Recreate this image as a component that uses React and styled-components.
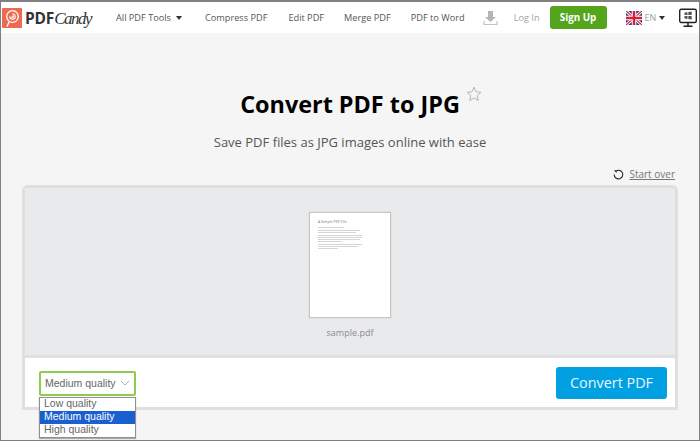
import React from 'react'
import styled, { createGlobalStyle } from 'styled-components'

const Global = createGlobalStyle`
  html, body { margin: 0; padding: 0; }
  body { font-family: "Open Sans", "Liberation Sans", sans-serif; background: #f5f5f5; }
`

const Frame = styled.div`
  width: 700px;
  height: 441px;
  box-sizing: border-box;
  border: 1px solid #808080;
  border-top-width: 2px;
  background: #f5f5f5;
  overflow: hidden;
  position: relative;
`

const Header = styled.header`
  height: 31px;
  background: #fff;
  display: flex;
  align-items: center;
  padding-left: 1px;
`

const Logo = styled.div`
  display: flex;
  align-items: center;
  width: 114px;
  flex: none;
`

const LogoText = styled.span`
  margin-left: 3px;
  font-size: 15.5px;
  font-weight: 700;
  color: #333;
  letter-spacing: -0.2px;
`

const LogoScript = styled.span`
  font-family: "Liberation Serif", serif;
  font-style: italic;
  font-weight: 400;
  font-size: 17px;
  letter-spacing: -1.5px;
`

const Nav = styled.nav`
  display: flex;
  align-items: center;
  gap: 20px;
  flex: none;
`

const NavLink = styled.a`
  font-size: 9.2px;
  color: ${p => (p.$muted ? '#a6a6a6' : '#555')};
  white-space: nowrap;
  display: flex;
  align-items: center;
  margin-right: ${p => p.$after || 0}px;
`

const Caret = styled.span`
  display: inline-block;
  width: 0;
  height: 0;
  margin-left: ${p => (p.$tight ? 0 : 5)}px;
  border-left: 3.5px solid transparent;
  border-right: 3.5px solid transparent;
  border-top: 4px solid #333;
`

const DownloadSlot = styled.div`
  display: flex;
  margin: 0 -4px 0 -2px;
`

const SignUp = styled.button`
  width: 57px;
  height: 23px;
  margin-left: -10px;
  border: none;
  border-radius: 3px;
  background: #55a51c;
  color: #fff;
  font: 700 9.8px "Open Sans", sans-serif;
  padding: 0;
`

const Lang = styled.div`
  display: flex;
  align-items: center;
  margin-left: -1px;
  font-size: 9px;
  color: #a0a0a0;
  gap: 3px;
`

const MonitorSlot = styled.div`
  margin-left: -6px;
  display: flex;
`

const Main = styled.main`
  display: flex;
  flex-direction: column;
  align-items: center;
`

const TitleRow = styled.div`
  margin-top: 55px;
  position: relative;
`

const Title = styled.h1`
  margin: 0;
  font-size: 23.4px;
  line-height: 33px;
  font-weight: 700;
  color: #000;
`

const Star = styled.svg`
  position: absolute;
  right: -22px;
  top: -2px;
`

const Subtitle = styled.p`
  margin: 12px 0 0;
  font-size: 13px;
  line-height: 18px;
  color: #555;
`

const StartRow = styled.div`
  align-self: flex-end;
  margin: 16px 24px 0 0;
  display: flex;
  align-items: center;
  gap: 5px;
  font-size: 10px;
  line-height: 14px;
  color: #777;
  text-decoration: underline;
`

const Panel = styled.section`
  width: 656px;
  box-sizing: border-box;
  margin-top: 4px;
  border: 3px solid #dfdfdf;
  border-radius: 6px 6px 0 0;
  background: #fff;
`

const Preview = styled.div`
  height: 143px;
  background: #e9eaec;
  border-bottom: 3px solid #dfdfdf;
  display: flex;
  flex-direction: column;
  align-items: center;
  padding-top: 24px;
`

const Page = styled.div`
  width: 82px;
  height: 106px;
  box-sizing: border-box;
  background: #fff;
  border: 1px solid #c6c6c6;
  box-shadow: 0 0 1px #bbb;
  padding: 6px 8px;
`

const PageHeading = styled.div`
  font-size: 3.6px;
  line-height: 5px;
  color: #777;
  margin-bottom: 1px;
`

const PageLine = styled.div`
  height: 1px;
  width: ${p => p.$w}px;
  background: #d4d4d4;
  margin-top: ${p => p.$gap || 1}px;
`

const FileName = styled.div`
  margin-top: 8px;
  font-size: 9px;
  line-height: 14px;
  color: #8c8c8c;
`

const Footer = styled.div`
  height: 49px;
  display: flex;
  align-items: center;
  justify-content: space-between;
  padding: 0 8px 0 14px;
`

const SelectWrap = styled.div`
  position: relative;
  margin-top: 1px;
`

const SelectBox = styled.div`
  width: 97px;
  height: 25px;
  box-sizing: border-box;
  border: 2px solid #8fcb4e;
  border-radius: 2px;
  background: #fff;
  display: flex;
  align-items: center;
  justify-content: space-between;
  padding: 0 4px;
  font: 10.5px "Liberation Sans", sans-serif;
  color: #666;
`

const Options = styled.ul`
  position: absolute;
  left: 0;
  top: 26px;
  width: 97px;
  box-sizing: border-box;
  margin: 0;
  padding: 0;
  list-style: none;
  background: #fff;
  border: 1px solid #8f8f8f;
  box-shadow: 0 1px 1px #aaa;
  font: 10.5px "Liberation Sans", sans-serif;
`

const Option = styled.li`
  height: 13px;
  line-height: 11px;
  padding-left: 4px;
  color: ${p => (p.$active ? '#fff' : '#666')};
  background: ${p => (p.$active ? '#1a5fd0' : 'transparent')};
`

const Convert = styled.button`
  width: 111px;
  height: 32px;
  border: none;
  border-radius: 3px;
  background: #00a0e3;
  color: #e6f6fd;
  font: 400 14.4px "Open Sans", sans-serif;
  padding: 0;
`

const LogoIcon = () => (
  <svg width="20" height="20" viewBox="0 0 20 20">
    <rect width="20" height="20" rx="1" fill="#ec6a50" />
    <circle cx="10.5" cy="8.5" r="5.8" fill="none" stroke="#fff" strokeWidth="1.3" />
    <path d="M10.5 5.8a2.7 2.7 0 1 1-2.7 2.7M10.5 7.6a.9.9 0 1 1-.9.9" fill="none" stroke="#fff" strokeWidth="1.1" />
    <path d="M7.3 13.5L5 18.5" stroke="#fff" strokeWidth="1.4" />
  </svg>
)

const DownloadIcon = () => (
  <svg width="15" height="16" viewBox="0 0 15 16">
    <path d="M5 1h5v6h3l-5.5 5L2 7h3z" fill="#b5b5b5" />
    <path d="M1 11v3.5h13V11" fill="none" stroke="#c4c4c4" strokeWidth="1.2" />
  </svg>
)

const Flag = () => (
  <svg width="16" height="14" viewBox="0 0 16 14">
    <rect width="16" height="14" fill="#2b3f8f" />
    <path d="M0 0l16 14M16 0L0 14" stroke="#fff" strokeWidth="3" />
    <path d="M0 0l16 14M16 0L0 14" stroke="#d8203a" strokeWidth="1.2" />
    <path d="M8 0v14M0 7h16" stroke="#fff" strokeWidth="4.5" />
    <path d="M8 0v14M0 7h16" stroke="#d8203a" strokeWidth="2.5" />
  </svg>
)

const Monitor = () => (
  <svg width="18" height="20" viewBox="0 0 18 20">
    <rect x="0.7" y="1.2" width="16.6" height="13.3" rx="1.5" fill="#fff" stroke="#222" strokeWidth="1.4" />
    <path d="M5.5 4.6l3-.4v2.9h-3zM9.3 4.1l3.4-.5v3.5H9.3zM5.5 8h3v2.9l-3-.4zM9.3 8h3.4v3.5l-3.4-.5z" fill="#555" />
    <path d="M9 14.5v3M4.5 18.2h9" stroke="#222" strokeWidth="1.5" />
  </svg>
)

const StarIcon = () => (
  <Star width="16" height="16" viewBox="0 0 16 16">
    <path d="M8 1.2l2 4.6 5 .5-3.8 3.3 1.1 4.9L8 12l-4.3 2.5 1.1-4.9L1 6.3l5-.5z" fill="none" stroke="#b5b5b5" strokeWidth="1" />
  </Star>
)

const RestartIcon = () => (
  <svg width="11" height="11" viewBox="0 0 11 11">
    <path d="M2.6 2.4A4.3 4.3 0 1 1 1.2 5.6" fill="none" stroke="#333" strokeWidth="1.2" />
    <path d="M0.8 1.2h2.8v2.8z" fill="#333" />
  </svg>
)

const Chevron = () => (
  <svg width="10" height="6" viewBox="0 0 10 6">
    <path d="M1 1l4 4 4-4" fill="none" stroke="#b0b0b0" strokeWidth="1" />
  </svg>
)

const lines = [
  [26, 3], [42, 2], [38], [44, 2], [44], [42], [24], [44, 2], [40], [20],
]

export default function App() {
  return (
    <Frame>
      <Global />
      <Header>
        <Logo>
          <LogoIcon />
          <LogoText>PDF<LogoScript>Candy</LogoScript></LogoText>
        </Logo>
        <Nav>
          <NavLink $after={3}>All PDF Tools<Caret /></NavLink>
          <NavLink $after={1}>Compress PDF</NavLink>
          <NavLink>Edit PDF</NavLink>
          <NavLink>Merge PDF</NavLink>
          <NavLink>PDF to Word</NavLink>
          <DownloadSlot><DownloadIcon /></DownloadSlot>
          <NavLink $muted>Log In</NavLink>
          <SignUp>Sign Up</SignUp>
          <Lang><Flag />EN<Caret $tight /></Lang>
          <MonitorSlot><Monitor /></MonitorSlot>
        </Nav>
      </Header>
      <Main>
        <TitleRow>
          <Title>Convert PDF to JPG</Title>
          <StarIcon />
        </TitleRow>
        <Subtitle>Save PDF files as JPG images online with ease</Subtitle>
        <StartRow><RestartIcon />Start over</StartRow>
        <Panel>
          <Preview>
            <Page>
              <PageHeading>A Simple PDF File</PageHeading>
              {lines.map(([w, gap], i) => <PageLine key={i} $w={w} $gap={gap} />)}
            </Page>
            <FileName>sample.pdf</FileName>
          </Preview>
          <Footer>
            <SelectWrap>
              <SelectBox>Medium quality<Chevron /></SelectBox>
              <Options>
                <Option>Low quality</Option>
                <Option $active>Medium quality</Option>
                <Option>High quality</Option>
              </Options>
            </SelectWrap>
            <Convert>Convert PDF</Convert>
          </Footer>
        </Panel>
      </Main>
    </Frame>
  )
}
